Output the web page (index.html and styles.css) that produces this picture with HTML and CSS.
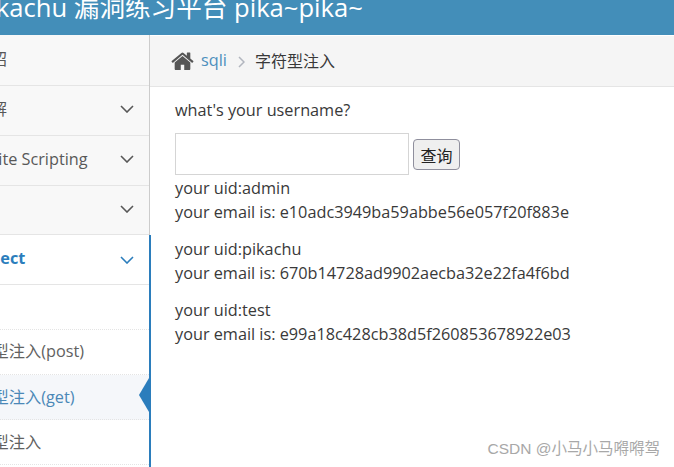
FILE: index.html
```html
<!DOCTYPE html>
<html lang="en">
<head>
    <meta charset="UTF-8">
    <title>Pikachu</title>
    <link rel="stylesheet" href="styles.css">
</head>
<body>
    <div class="page">
        <div class="navbar">Pikachu 漏洞练习平台 pika~pika~</div>
        <div class="layout">
            <div class="sidebar">
                <div class="nav-item first">系统介绍</div>
                <div class="nav-item">暴力破解
                    <svg class="chevron" viewBox="0 0 14 8"><polyline points="1,1 7,7 13,1"/></svg>
                </div>
                <div class="nav-item">Cross-Site Scripting
                    <svg class="chevron" viewBox="0 0 14 8"><polyline points="1,1 7,7 13,1"/></svg>
                </div>
                <div class="nav-item short">CSRF
                    <svg class="chevron" viewBox="0 0 14 8"><polyline points="1,1 7,7 13,1"/></svg>
                </div>
                <div class="sql-group">
                    <div class="nav-item open">SQL-Inject
                        <svg class="chevron" viewBox="0 0 14 8"><polyline points="1,1 7,7 13,1"/></svg>
                    </div>
                    <div class="sub-item">概述</div>
                    <div class="sub-item">数字型注入(post)</div>
                    <div class="sub-item active">字符型注入(get)</div>
                    <div class="sub-item last">搜索型注入</div>
                </div>
            </div>
            <div class="main">
                <div class="breadcrumb">
                    <svg class="home" viewBox="0 140 1664 1400"><path d="M1408 992v480q0 26-19 45t-45 19h-384v-384h-256v384h-384q-26 0-45-19t-19-45v-480q0-1 .5-3t.5-3l575-474 575 474q1 2 1 6zm223-69l-62 74q-8 9-21 11h-3q-13 0-21-7l-692-577-692 577q-12 8-24 7-13-2-21-11l-62-74q-8-10-7-23.500t11-21.500l719-599q32-26 76-26t76 26l244 204v-195q0-14 9-23t23-9h192q14 0 23 9t9 23v408l219 182q10 8 11 21.500t-7 23.500z"/></svg>
                    <a class="crumb-link">sqli</a>
                    <svg class="crumb-sep" viewBox="0 0 7 12"><polyline points="1,1 6,6 1,11"/></svg>
                    <span class="crumb-current">字符型注入</span>
                </div>
                <div class="content">
                    <p class="question">what's your username?</p>
                    <form class="query-form">
                        <input class="query-input" type="text">
                        <button class="query-btn" type="button">查询</button>
                    </form>
                    <p class="result">your uid:admin<br>your email is: e10adc3949ba59abbe56e057f20f883e</p>
                    <p class="result">your uid:pikachu<br>your email is: 670b14728ad9902aecba32e22fa4f6bd</p>
                    <p class="result">your uid:test<br>your email is: e99a18c428cb38d5f260853678922e03</p>
                </div>
            </div>
        </div>
    </div>
    <div class="watermark">CSDN @小马小马嘚嘚驾</div>
</body>
</html>
```

FILE: styles.css
```css
html, body {
    height: 100%;
    margin: 0;
    overflow: hidden;
}
body {
    background: #fff;
    color: #393939;
    font-family: 'Open Sans', 'Noto Sans CJK SC', sans-serif;
    font-size: 16.25px;
    line-height: 24px;
}
.page {
    margin: -10px 0 0 -70px;
    width: 744px;
}
.navbar {
    height: 45px;
    box-sizing: border-box;
    background: #438eb9;
    color: #fff;
    font-size: 25.6px;
    line-height: 36px;
    white-space: nowrap;
    padding-left: 44px;
}
.layout {
    display: flex;
}
.sidebar {
    display: flex;
    flex-direction: column;
    width: 219px;
    flex: none;
    background: #f8f8f8;
    border-right: 1px solid #cccccc;
    height: 432px;
}
.nav-item {
    position: relative;
    height: 49px;
    border-bottom: 1px solid #e5e5e5;
    padding-left: 12px;
    line-height: 47px;
    color: #585858;
    white-space: nowrap;
}
.nav-item.first {
    height: 50px;
    line-height: 49px;
}
.nav-item.short {
    height: 48px;
}
.chevron {
    position: absolute;
    right: 15px;
    top: 19px;
    width: 14px;
    height: 8px;
    fill: none;
    stroke: #585858;
    stroke-width: 1.6;
}
.sql-group {
    flex: 1;
    background: #fff;
    margin-right: -2px;
    border-right: 2px solid #2b7dbc;
}
.nav-item.open {
    color: #2b7dbc;
    font-weight: 700;
    background: #fff;
    padding-left: 13px;
}
.nav-item.open .chevron {
    stroke: #2b7dbc;
    top: 21px;
}
.sub-item {
    position: relative;
    height: 45px;
    box-sizing: border-box;
    border-bottom: 1px dotted #e4e4e4;
    padding-left: 30px;
    line-height: 43px;
    color: #616161;
    white-space: nowrap;
}
.sub-item.active {
    color: #4b88b7;
    background: #f5f7fa;
    line-height: 44px;
}
.sub-item.last {
    line-height: 45px;
}
.sub-item.active::after {
    content: "";
    position: absolute;
    right: 0;
    top: 3px;
    border-top: 17px solid transparent;
    border-bottom: 17px solid transparent;
    border-right: 10px solid #2b7dbc;
}
.main {
    flex: 1;
}
.breadcrumb {
    display: flex;
    align-items: center;
    height: 50px;
    margin-top: 1px;
    padding-left: 21px;
    background: #f5f5f5;
    border-bottom: 1px solid #e5e5e5;
}
.home {
    width: 23px;
    height: 19px;
    fill: #555;
    margin-top: -2px;
}
.crumb-link {
    color: #4c8fbd;
    margin: -2px 0 0 7px;
}
.crumb-sep {
    width: 7px;
    height: 12px;
    margin: 2px 10px 0 11px;
    fill: none;
    stroke: #b2b6bf;
    stroke-width: 1.5;
}
.crumb-current {
    font-size: 16px;
}
.content {
    padding: 11px 0 0 25px;
}
.content p {
    margin: 0;
}
.content .question {
    margin-bottom: 11px;
}
.query-form {
    display: flex;
    align-items: center;
    gap: 4px;
    margin: 0 0 1px;
}
.query-input {
    width: 234px;
    height: 42px;
    box-sizing: border-box;
    border: 1px solid #d5d5d5;
    background: #fff;
    padding: 0;
}
.query-btn {
    width: 47px;
    height: 31px;
    padding: 0;
    background: #efefef;
    border: 1px solid #8f8f9d;
    border-radius: 4px;
    color: #222;
    font-family: inherit;
    font-size: 16px;
    margin-top: 1px;
}
.content .result {
    margin-bottom: 13px;
}
.watermark {
    position: absolute;
    right: 14px;
    top: 439px;
    color: #a8a8a8;
    font-family: 'Liberation Sans', 'Noto Sans CJK SC', sans-serif;
    font-size: 15.5px;
    line-height: 20px;
}
```
